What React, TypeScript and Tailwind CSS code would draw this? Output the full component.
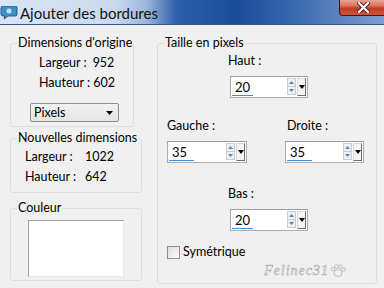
import type { ReactNode } from "react";

const Legend = ({ children }: { children: ReactNode }) => (
  <legend className="ml-[6px] px-[1px] leading-[16px] whitespace-nowrap">{children}</legend>
);

const Spin = ({ value, bar, w }: { value: string; bar: number; w: string }) => (
  <div className={`${w} h-[22px] border border-[#abadb3] border-t-[#9aa0aa] bg-white flex`}>
    <div className="flex-1 flex flex-col">
      <span className="ml-[4px] mt-[2px] text-[13px] leading-[16px]">{value}</span>
      <div className="mt-auto mb-[1px] ml-[1px] h-[3px] bg-[#3c8ee0]" style={{ width: bar }} />
    </div>
    <div className="mt-[1px] w-[9px] h-[17px] flex flex-col border border-[#c4cdd8] bg-[#eef2f7]">
      <div className="flex-1 flex items-center justify-center border-b border-[#c4cdd8]">
        <svg width="5" height="3" viewBox="0 0 5 3">
          <path d="M0 3 L2.5 0 L5 3 Z" fill="#6b7f99" />
        </svg>
      </div>
      <div className="flex-1 flex items-center justify-center">
        <svg width="5" height="3" viewBox="0 0 5 3">
          <path d="M0 0 L2.5 3 L5 0 Z" fill="#6b7f99" />
        </svg>
      </div>
    </div>
    <div className="ml-[1px] mr-[1px] mt-[1px] w-[9px] h-[18px] flex items-center justify-center border border-[#d8d8d8] border-r-[#707070] border-b-[#707070] bg-[#f4f4f4]">
      <svg width="6" height="4" viewBox="0 0 6 4">
        <path d="M0 0 L3 4 L6 0 Z" fill="#000" />
      </svg>
    </div>
  </div>
);

const TitleBar = () => (
  <div className="h-[25px] flex items-start border-b border-[#35598c] bg-[linear-gradient(to_right,#dae5f3_0%,#c9d9ee_30%,#9db7dc_38%,#2c5ea9_46%,#1b4c9b_62%,#3d6cb0_78%,#7e9ecf_100%)]">
    <svg className="mt-[6px]" width="18" height="14" viewBox="0 0 18 14">
      <path d="M1 2 Q1 0 3 0 L15 0 Q17 0 17 2 L17 8 Q17 10 15 10 L8 10 L4 13 L5 10 L3 10 Q1 10 1 8 Z" fill="#3a8fc9" stroke="#1d5f93" />
      <circle cx="9" cy="5" r="2.5" fill="#bfe3f7" />
    </svg>
    <span className="ml-[2px] mt-[3px] text-[15px] leading-[20px] text-[#111]">
      Ajouter des bordures
    </span>
    <div className="ml-auto mr-[-4px] w-[49px] h-[16px] rounded-bl-[4px] border border-t-0 border-[#4a1410] bg-[linear-gradient(to_bottom,#e9a595_0%,#d8705e_40%,#c03a22_55%,#d0563c_100%)] flex items-center justify-center">
      <svg width="13" height="11" viewBox="0 0 13 11">
        <path d="M2 1 L11 10 M11 1 L2 10" stroke="#4a1a14" strokeWidth="4" strokeLinecap="square" />
        <path d="M2 1 L11 10 M11 1 L2 10" stroke="#fff" strokeWidth="2.2" strokeLinecap="square" />
      </svg>
    </div>
  </div>
);

export default function App() {
  return (
    <div className="w-[384px] h-[288px] overflow-hidden bg-[#f0f0f0] text-[12.5px] text-black font-['Lato',sans-serif]">
      <TitleBar />
      <div className="flex pt-[10px] pl-[10px]">
        {/* left column */}
        <div className="flex flex-col">
          <fieldset className="w-[124px] h-[92px] border border-[#d5dfe5] rounded-[3px]">
            <Legend>Dimensions d'origine</Legend>
            <div className="mt-[4px] pl-[28px] flex leading-[16px] whitespace-nowrap">
              <span>Largeur :</span>
              <span className="ml-[6px]">952</span>
            </div>
            <div className="mt-[4px] pl-[28px] flex leading-[16px] whitespace-nowrap">
              <span>Hauteur :</span>
              <span className="ml-[3px]">602</span>
            </div>
            <div className="mt-[12px] ml-[19px] w-[89px] h-[19px] rounded-[2px] border border-[#8e8f8f] bg-[linear-gradient(to_bottom,#f2f2f2,#e4e4e4)] flex items-center">
              <span className="ml-[3px] leading-[16px]">Pixels</span>
              <svg className="ml-auto mr-[5px]" width="7" height="4" viewBox="0 0 7 4">
                <path d="M0 0 L3.5 4 L7 0 Z" fill="#000" />
              </svg>
            </div>
          </fieldset>
          <fieldset className="mt-[3px] w-[132px] h-[63px] border border-[#d5dfe5] rounded-[3px]">
            <Legend>Nouvelles dimensions</Legend>
            <div className="mt-[3px] pl-[14px] flex leading-[16px] whitespace-nowrap">
              <span className="w-[60px] shrink-0">Largeur :</span>
              <span>1022</span>
            </div>
            <div className="mt-[4px] pl-[14px] flex leading-[16px] whitespace-nowrap">
              <span className="w-[60px] shrink-0">Hauteur :</span>
              <span>642</span>
            </div>
          </fieldset>
          <fieldset className="mt-[7px] w-[132px] h-[81px] border border-[#d5dfe5] rounded-[3px]">
            <Legend>Couleur</Legend>
            <div className="mt-[4px] ml-[17px] w-[96px] h-[57px] bg-white border border-[#a0a0a0] border-r-[#e8e8e8] border-b-[#e8e8e8]" />
          </fieldset>
        </div>

        {/* right column */}
        <fieldset className="ml-[15px] w-[220px] h-[249px] border border-[#d5dfe5] rounded-[3px]">
          <Legend>Taille en pixels</Legend>
          <div className="mt-[2px] ml-[70px] leading-[16px]">Haut :</div>
          <div className="mt-[7px] ml-[72px]">
            <Spin value="20" bar={21} w="w-[78px]" />
          </div>
          <div className="mt-[20px] flex leading-[16px]">
            <span className="ml-[9px] w-[120px]">Gauche :</span>
            <span>Droite :</span>
          </div>
          <div className="mt-[7px] flex">
            <div className="ml-[9px]">
              <Spin value="35" bar={25} w="w-[80px]" />
            </div>
            <div className="ml-[38px]">
              <Spin value="35" bar={25} w="w-[79px]" />
            </div>
          </div>
          <div className="mt-[23px] ml-[70px] leading-[16px]">Bas :</div>
          <div className="mt-[7px] ml-[72px]">
            <Spin value="20" bar={21} w="w-[78px]" />
          </div>
          <div className="mt-[13px] ml-[9px] flex items-center">
            <div className="w-[13px] h-[13px] border border-[#8f8f8f] bg-[linear-gradient(135deg,#dcdcdc,#fbfbfb)]" />
            <span className="ml-[3px] leading-[16px]">Symétrique</span>
          </div>
          <div className="mt-[4px] ml-[106px] flex items-center">
            <span className="italic text-[14px] leading-[14px] tracking-[1px] font-['Liberation_Serif',serif] text-transparent [-webkit-text-stroke:0.6px_#b0b0b0]">
              Felinec31
            </span>
            <svg className="ml-[1px]" width="16" height="14" viewBox="0 0 16 14">
              <g fill="none" stroke="#b0b0b0" strokeWidth="0.8">
                <ellipse cx="8" cy="9" rx="4" ry="3.5" />
                <circle cx="3" cy="5" r="1.8" />
                <circle cx="6.5" cy="2.5" r="1.8" />
                <circle cx="10.5" cy="2.5" r="1.8" />
                <circle cx="13.5" cy="5.5" r="1.8" />
              </g>
            </svg>
          </div>
        </fieldset>
      </div>
    </div>
  );
}
